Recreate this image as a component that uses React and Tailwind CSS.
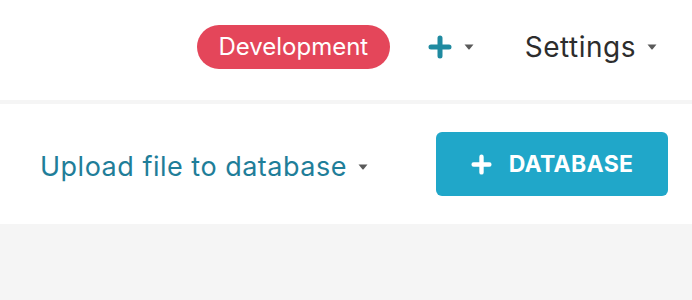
import React from "react";

const Caret = ({ className = "" }) => (
  <svg viewBox="0 0 10 6" className={className} fill="currentColor">
    <path d="M0.5 0.5h9L5.6 5.2a0.8 0.8 0 0 1-1.2 0z" />
  </svg>
);

const Plus = ({ className = "", stroke = 4 }) => (
  <svg viewBox="0 0 24 24" className={className} fill="none" stroke="currentColor" strokeWidth={stroke} strokeLinecap="round">
    <path d="M12 3v18M3 12h18" />
  </svg>
);

export default function App() {
  return (
    <div className="min-h-[300px] bg-[#f5f5f5] font-['Inter',sans-serif]">
      <header className="h-[100px] bg-white flex items-center justify-end pr-[35px] pb-[6px]">
        <span className="h-[44px] w-[193px] flex items-center justify-center rounded-full bg-[#e4465a] text-white text-[24px]">
          Development
        </span>
        <button className="ml-[38px] flex items-center gap-[12px] text-[#1f8aa0]">
          <Plus className="w-[24px] h-[24px]" stroke={5} />
          <Caret className="w-[10px] h-[6px] text-[#5a5a5a]" />
        </button>
        <button className="ml-[51px] flex items-center gap-[11px] text-[#2d2d2d] text-[28px] tracking-[0.5px]">
          Settings
          <Caret className="w-[10px] h-[6px] text-[#5a5a5a]" />
        </button>
      </header>
      <div className="h-[4px] bg-[#f5f5f5]" />
      <section className="h-[120px] bg-white flex items-center justify-between pl-[40px] pr-[24px]">
        <button className="flex items-center gap-[11px] text-[#1f7e99] text-[27px] tracking-[0.5px] pt-[6px]">
          Upload file to database
          <Caret className="w-[10px] h-[6px] text-[#5a5a5a]" />
        </button>
        <button className="w-[232px] h-[64px] rounded-[6px] bg-[#20a7c9] text-white flex items-center justify-center gap-[17px] text-[23px] font-bold tracking-[0.3px]">
          <Plus className="w-[21px] h-[21px]" stroke={5} />
          DATABASE
        </button>
      </section>
    </div>
  );
}
